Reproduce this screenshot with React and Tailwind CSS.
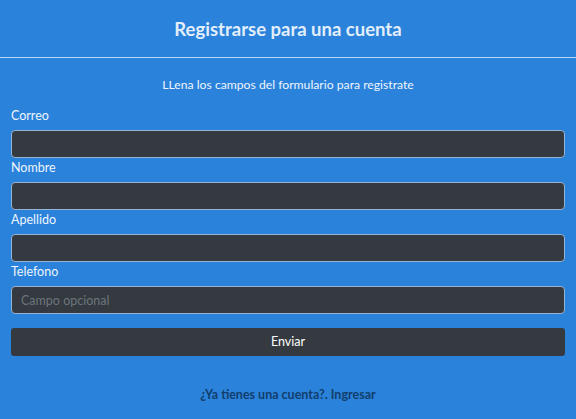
export default function App() {
  const fields = [
    { label: 'Correo', placeholder: '' },
    { label: 'Nombre', placeholder: '' },
    { label: 'Apellido', placeholder: '' },
    { label: 'Telefono', placeholder: 'Campo opcional' },
  ];

  return (
    <div className="w-[576px] h-[419px] bg-[#2a82db] text-[#eef5fc] font-['Lato',sans-serif] overflow-hidden">
      <div className="h-[58px] border-b border-[#b9d6f3] flex items-center justify-center">
        <h1 className="text-[18.5px] font-bold text-[#e2eefa] pt-[2px]">Registrarse para una cuenta</h1>
      </div>

      <div className="px-[11px]">
        <p className="text-center text-[12.2px] h-[18px] leading-[18px] mt-[18px] mb-[12px]">
          LLena los campos del formulario para registrate
        </p>

        <form className="flex flex-col" onSubmit={(e) => e.preventDefault()}>
          {fields.map((f) => (
            <div key={f.label} className="flex flex-col">
              <label className="text-[12.5px] h-[20px] leading-[20px] mb-[4px]">{f.label}</label>
              <input
                type="text"
                placeholder={f.placeholder}
                className="h-[28px] rounded-[4px] bg-[#343a40] border border-[#94b4d6] px-[9px] text-[12.5px] text-white placeholder:text-[#6c757d] outline-none"
              />
            </div>
          ))}

          <button
            type="submit"
            className="mt-[14px] h-[28px] rounded-[3px] bg-[#343a40] text-white text-[12.5px]"
          >
            Enviar
          </button>
        </form>

        <p className="text-center text-[12.5px] font-bold text-[#123e6b] mt-[30px]">
          ¿Ya tienes una cuenta?. Ingresar
        </p>
      </div>
    </div>
  );
}
